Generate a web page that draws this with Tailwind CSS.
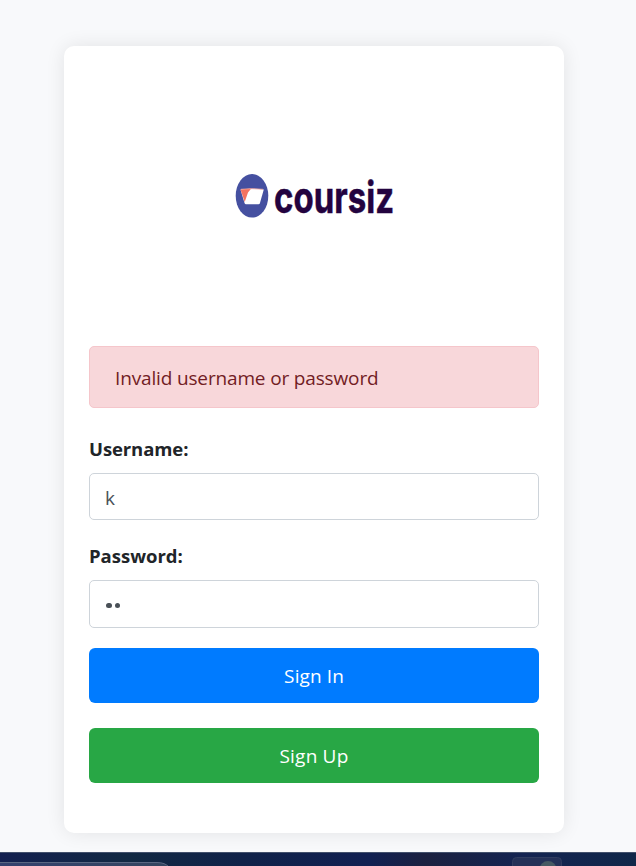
<!DOCTYPE html>
<html lang="en">
<head>
<meta charset="utf-8">
<title>Coursiz - Sign In</title>
<script src="https://cdn.jsdelivr.net/npm/@tailwindcss/browser@4"></script>
</head>
<body class="flex h-[866px] w-[636px] flex-col overflow-hidden bg-[#f8f9fb] font-['Open_Sans','Noto_Sans',sans-serif] text-[19px] text-[#212529]">
<main class="h-[852px] shrink-0 pt-[46px] pl-16">
  <form class="flex h-[787px] w-[500px] flex-col rounded-[10px] bg-white px-[25px] shadow-[0_0_19px_rgba(0,0,0,0.09)]">
    <div class="flex h-[300px] shrink-0 items-center justify-center">
      <svg class="block h-[80px] w-[220px] overflow-visible" viewBox="-20 -10 220 80" role="img" aria-label="coursiz">
        <ellipse cx="28" cy="29.8" rx="16.3" ry="21.8" fill="#4550a0"/>
        <path d="M16.5 23.5Q28 21.8 39.8 23.5L35.8 37.5Q35.5 38.3 34.5 38.3H22Q21 38.3 20.6 37.3Z" fill="#fff"/>
        <path d="M16.5 23.5Q21 22.7 27 22.8L24 26.5L20.7 36Z" fill="#f4725f"/>
        <path d="M17 23.3Q28 22 39 23.3" fill="none" stroke="#f8a89c" stroke-width=".8"/>
        <text transform="translate(50 47) scale(.87 1)" font-family="Inter, sans-serif" font-weight="700" font-size="43" textLength="138" lengthAdjust="spacingAndGlyphs" fill="#23033f" stroke="#23033f" stroke-width=".5">coursiz</text>
      </svg>
    </div>
    <div class="flex h-[62px] shrink-0 items-center rounded-[5px] border border-[#f5c6cb] bg-[#f8d7da] px-[25px] pt-[2px] text-[#721c24]"><span class="tracking-[-0.15px]">Invalid username or password</span></div>
    <label class="mt-[26px] h-[30px] shrink-0 text-[18.5px] leading-[30px] font-bold tracking-[-0.1px]">Username:</label>
    <div class="mt-[9px] flex h-[47px] shrink-0 items-center rounded-[5px] border border-[#ced4da] px-[15px] pt-[3px] text-[#495057]"><span>k</span></div>
    <label class="mt-[21px] h-[30px] shrink-0 text-[18.5px] leading-[30px] font-bold">Password:</label>
    <div class="mt-[9px] flex h-[48px] shrink-0 items-center gap-[3px] rounded-[5px] border border-[#ced4da] px-4 pt-[3px]"><i class="size-[5.5px] rounded-full bg-[#495057]"></i><i class="size-[5.5px] rounded-full bg-[#495057]"></i></div>
    <button type="button" class="mt-5 h-[55px] shrink-0 rounded-[6px] bg-[#007bff] pt-px tracking-[0.1px] text-white">Sign In</button>
    <button type="button" class="mt-[25px] h-[55px] shrink-0 rounded-[6px] bg-[#28a745] pt-px tracking-[0.2px] text-white">Sign Up</button>
  </form>
</main>
<footer class="flex h-[14px] shrink-0 items-end overflow-hidden border-t border-[#42506c] bg-[#112249]">
  <svg class="block h-[13px] w-[636px]" viewBox="0 0 636 13">
    <defs>
      <linearGradient id="bar"><stop stop-color="#132050"/><stop offset=".2" stop-color="#122943"/><stop offset=".38" stop-color="#102249"/><stop offset=".58" stop-color="#112052"/><stop offset=".67" stop-color="#1b2140"/><stop offset=".82" stop-color="#142452"/><stop offset="1" stop-color="#102749"/></linearGradient>
      <linearGradient id="search"><stop stop-color="#34416e"/><stop offset="1" stop-color="#344660"/></linearGradient>
    </defs>
    <path d="M0 0H636V13H0Z" fill="url(#bar)"/>
    <path d="M-1 9.5H157Q165 9.5 169 14H-1Z" fill="url(#search)" stroke="#596782"/>
    <rect x="512.5" y="4.5" width="49" height="20" rx="4" fill="#243158" stroke="#303d60"/>
    <circle cx="548" cy="16.5" r="8.5" fill="#465963"/>
  </svg>
</footer>
</body>
</html>
